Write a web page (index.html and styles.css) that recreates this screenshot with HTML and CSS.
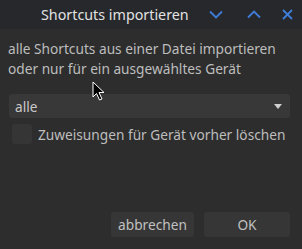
FILE: index.html
```html
<!DOCTYPE html>
<html lang="de">
<head>
    <meta charset="UTF-8">
    <title>Shortcuts importieren</title>
    <link rel="stylesheet" href="styles.css">
</head>
<body>
    <div class="dialog">
        <div class="titlebar">
            <div class="title">Shortcuts importieren</div>
            <div class="win-buttons">
                <div class="win-btn btn-min">
                    <svg width="14" height="9" viewBox="0 0 14 9"><path d="M1 1.5 L7 7.5 L13 1.5" fill="none" stroke="#3f7dd8" stroke-width="1.8"/></svg>
                </div>
                <div class="win-btn btn-max">
                    <svg width="14" height="9" viewBox="0 0 14 9"><path d="M1 7.5 L7 1.5 L13 7.5" fill="none" stroke="#3f7dd8" stroke-width="1.8"/></svg>
                </div>
                <div class="win-btn btn-close">
                    <svg width="11" height="11" viewBox="0 0 11 11"><path d="M1 1 L10 10 M10 1 L1 10" fill="none" stroke="#3f7dd8" stroke-width="1.8"/></svg>
                </div>
            </div>
        </div>

        <div class="content">
            <p class="intro">alle Shortcuts aus einer Datei importieren<br>oder nur für ein ausgewähltes Gerät</p>

            <div class="combo">
                <span>alle</span>
                <span class="combo-arrow"></span>
            </div>

            <label class="check-row">
                <span class="checkbox"></span>
                <span class="check-label">Zuweisungen für Gerät vorher löschen</span>
            </label>

            <div class="actions">
                <div class="button btn-cancel">abbrechen</div>
                <div class="button btn-ok">OK</div>
            </div>
        </div>

        <svg class="cursor" width="14" height="21" viewBox="0 0 14 21">
            <path d="M1 1 L1 16 L4.5 12.5 L7.5 19 L10 18 L7 11.5 L12 11.5 Z" fill="#000" stroke="#fff" stroke-width="1"/>
        </svg>
    </div>
</body>
</html>
```

FILE: styles.css
```css
body {
    margin: 0;
    padding: 0;
    background: #2d2d2d;
    font-family: "Noto Sans", sans-serif;
    overflow: hidden;
}

.dialog {
    position: relative;
    width: 302px;
    height: 249px;
    display: flex;
    flex-direction: column;
    background: #2d2d2d;
}

.titlebar {
    height: 29px;
    display: flex;
    align-items: center;
    background: #26282c;
}

.title {
    margin-left: 41px;
    color: #e2e2e2;
    font-size: 14.3px;
    white-space: nowrap;
    flex: 1;
}

.win-buttons {
    display: flex;
    align-items: center;
}

.win-btn {
    display: flex;
    justify-content: center;
    align-items: center;
    height: 29px;
}

.btn-min {
    width: 37px;
}

.btn-max {
    width: 39px;
}

.btn-close {
    width: 29px;
}

.content {
    flex: 1;
    display: flex;
    flex-direction: column;
    padding: 0 12px 12px 8px;
}

.intro {
    margin: 10px 0 0 0;
    color: #bdbdbd;
    font-size: 13.7px;
    line-height: 20px;
    white-space: nowrap;
}

.combo {
    margin: 15px 0 0 1px;
    height: 24px;
    border-radius: 3px;
    background: #383838;
    display: flex;
    align-items: center;
    justify-content: space-between;
    padding: 0 8px 0 6px;
    color: #c8c8c8;
    font-size: 13.7px;
}

.combo-arrow {
    width: 0;
    height: 0;
    border-left: 4px solid transparent;
    border-right: 4px solid transparent;
    border-top: 5px solid #d0d0d0;
}

.check-row {
    margin: 6px 0 0 4px;
    display: flex;
    align-items: center;
    gap: 6px;
    color: #bdbdbd;
    font-size: 13.7px;
}

.checkbox {
    flex: none;
    width: 20px;
    height: 20px;
    border-radius: 3px;
    background: #353535;
}

.check-label {
    white-space: nowrap;
}

.actions {
    margin-top: auto;
    display: flex;
    justify-content: flex-end;
    gap: 10px;
}

.button {
    height: 25px;
    border-radius: 3px;
    background: #363636;
    color: #c0c0c0;
    font-size: 13.7px;
    display: flex;
    align-items: center;
    justify-content: center;
}

.btn-cancel {
    width: 83px;
}

.btn-ok {
    width: 86px;
}

.cursor {
    position: absolute;
    left: 92px;
    top: 81px;
}
```
